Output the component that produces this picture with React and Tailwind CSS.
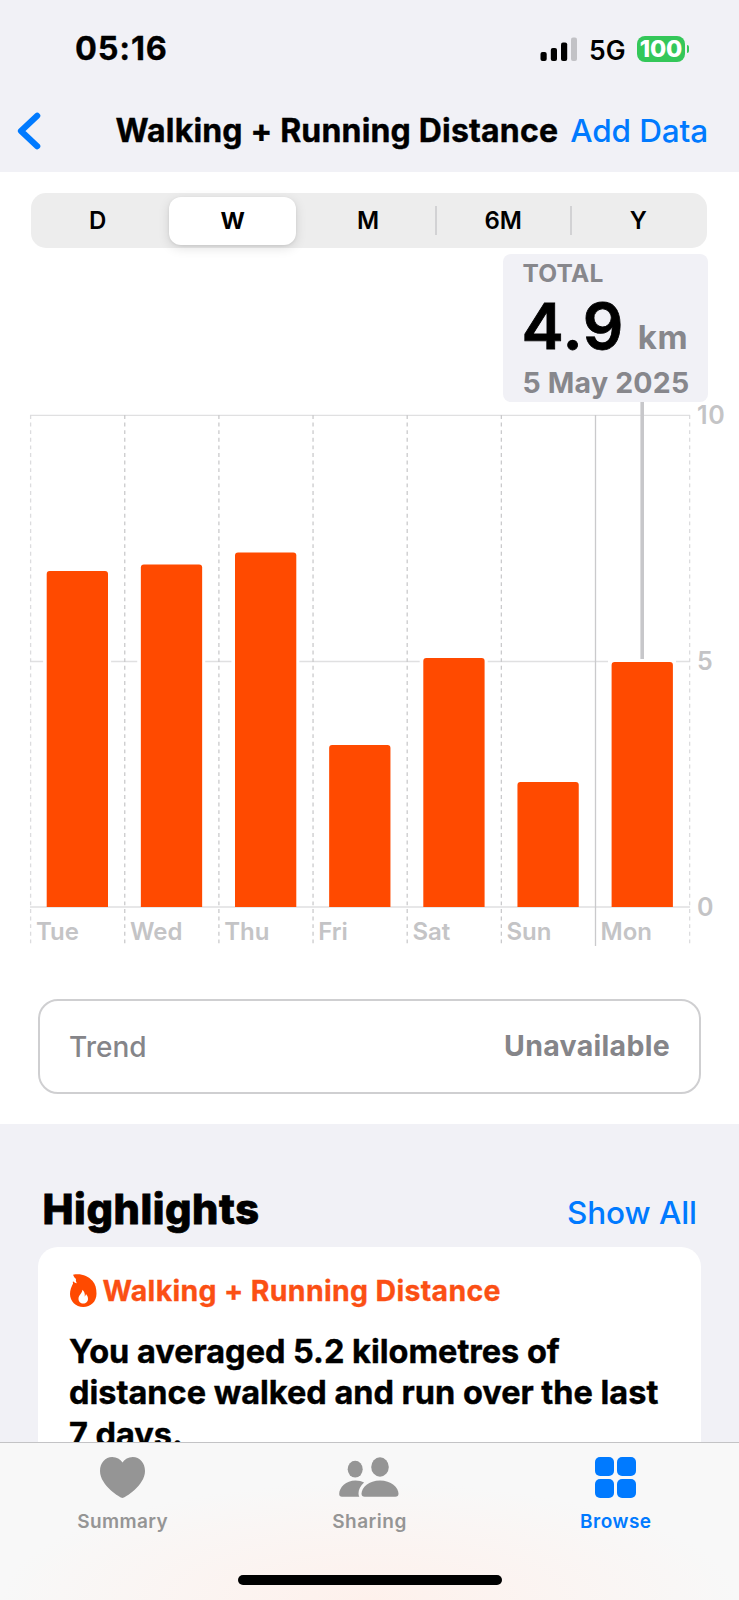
import React from "react";

const ranges = [
  { label: "D", divider: false },
  { label: "W", selected: true },
  { label: "M", divider: false },
  { label: "6M", divider: true },
  { label: "Y", divider: true },
];

const days = [
  { label: "Tue", top: 571 },
  { label: "Wed", top: 564.5 },
  { label: "Thu", top: 552.5 },
  { label: "Fri", top: 745 },
  { label: "Sat", top: 658 },
  { label: "Sun", top: 782 },
  { label: "Mon", top: 662 },
];

const STEP = 94.15;
const LEFT = 30.6;

function StatusBar() {
  return (
    <div className="flex h-[98px] items-center justify-between pl-[75px] pr-[50px] text-black">
      <div className="text-[32.5px] font-bold leading-8 tracking-[0.8px] [-webkit-text-stroke:0.3px_black]">05:16</div>
      <div className="flex items-center">
        <svg className="h-6 w-[37px]" viewBox="0 0 37 24">
          <rect x="0.5" y="15" width="6.2" height="9" rx="2" />
          <rect x="10.8" y="11" width="6.2" height="13" rx="2" />
          <rect x="21" y="5.5" width="6.2" height="18.5" rx="2" />
          <rect x="31" y="0.5" width="6" height="23.5" rx="2" fill="#c2c2c6" />
        </svg>
        <div className="ml-[11.5px] mt-[2px] text-[26.5px] font-semibold leading-6">5G</div>
        <div className="ml-[11.5px] flex h-[26px] w-12 items-center justify-center rounded-[8px] bg-[#34c759] text-[23.5px] font-extrabold leading-6 tracking-[-0.2px] text-white">
          100
        </div>
        <div className="ml-[1.5px] h-2 w-[2.5px] rounded-r-full bg-[#34c759]" />
      </div>
    </div>
  );
}

function NavBar() {
  return (
    <div className="flex h-[74px] items-start">
      <svg className="ml-[17px] mt-[14px] h-[38px] w-6" viewBox="0 0 24 38" fill="none" stroke="#007aff" strokeWidth="6.2" strokeLinecap="round" strokeLinejoin="round">
        <path d="M20.2 3.8L4 19l16.2 15.2" />
      </svg>
      <h1 className="ml-[74.5px] mt-[13px] whitespace-nowrap text-[32px] font-bold leading-10 tracking-[0.18px] [-webkit-text-stroke:0.4px_black]">Walking + Running Distance</h1>
      <button className="ml-3 mt-[13px] whitespace-nowrap text-[31.5px] font-[450] leading-10 tracking-[-0.12px] text-[#007aff]">Add Data</button>
    </div>
  );
}

function Segments() {
  return (
    <div className="ml-[31px] mr-8 grid h-[55px] grid-cols-5 rounded-[15px] bg-[#ededed]">
      {ranges.map((r) => (
        <div key={r.label} className="flex items-center">
          <div className={r.divider ? "-ml-[1.5px] h-[29px] w-[1.5px] bg-[#d2d2d4]" : "-ml-[1.5px] h-[29px] w-[1.5px]"} />
          <div
            className={
              r.selected
                ? "ml-[3px] mr-[5px] flex h-12 flex-1 items-center justify-center rounded-[12px] bg-white pt-[1px] text-[23.5px] font-bold shadow-[0_3px_12px_rgba(0,0,0,0.12),0_1px_3px_rgba(0,0,0,0.08)]"
                : "flex h-12 flex-1 items-center justify-center pr-[2px] pt-[1px] text-[24px] font-semibold"
            }
          >
            {r.label}
          </div>
        </div>
      ))}
    </div>
  );
}

function Callout() {
  return (
    <div className="ml-[503px] mt-[6px] flex h-[148px] w-[205px] flex-col rounded-[8px] bg-[#f1f1f6] pl-[19.5px] text-[#87878c]">
      <div className="mt-[7px] text-[24.5px] font-bold leading-6 tracking-[0.2px]">TOTAL</div>
      <div className="mt-[9px] flex h-16 items-baseline whitespace-nowrap leading-[64px]">
        <span className="-ml-[1px] text-[63.5px] font-semibold tracking-[0.8px] text-black [-webkit-text-stroke:0.8px_black]">4.9</span>
        <span className="ml-[13.5px] text-[33px] font-bold tracking-[0.6px]">km</span>
      </div>
      <div className="mt-[9px] whitespace-nowrap text-[28.5px] font-bold leading-8 tracking-[0.2px]">5 May 2025</div>
    </div>
  );
}

function Chart() {
  return (
    <div className="flex h-[545px] text-[24px] font-semibold leading-6 text-[#c4c4c6]">
      <div className="relative w-[697px]">
        <svg className="block h-[545px] w-[697px]" viewBox="0 402 697 545">
          <g stroke="#e0e0e1" strokeWidth="1.3">
            <path d="M30 415.3H690M30 661.5H690M30 907H690" />
          </g>
          {[0, 1, 2, 3, 4, 5, 6, 7].map((i) => (
            <line
              key={i}
              x1={LEFT + i * STEP}
              x2={LEFT + i * STEP}
              y1="415"
              y2="946"
              stroke={i === 7 || i === 0 ? "#dcdcde" : "#cacacc"}
              strokeWidth="1.3"
              strokeDasharray={i === 6 ? "none" : "3.9 3.7"}
            />
          ))}
          {days.map((d, i) => (
            <g key={d.label}>
              <rect x={LEFT + i * STEP + 12.5} y={d.top - 3} width="68" height={909 - d.top} fill="#fff" />
              <path
                d={`M${LEFT + i * STEP + 16.1} 907V${d.top + 3}q0-3 3-3h55.3q3 0 3 3V907z`}
                fill="#ff4a00"
              />
            </g>
          ))}
          <path d="M642.2 402V659" stroke="#c7c7ca" strokeWidth="3.6" />
        </svg>
        <div className="absolute bottom-[3px] left-[31px] grid w-[658.7px] grid-cols-7">
          {days.map((d) => (
            <div key={d.label} className="pl-[5px]">{d.label}</div>
          ))}
        </div>
      </div>
      <div className="mt-[1px] flex h-[515.5px] flex-col justify-between text-[25px] tracking-[0.8px]">
        <span>10</span>
        <span>5</span>
        <span>0</span>
      </div>
    </div>
  );
}

function Trend() {
  return (
    <div className="mx-[38px] mt-[52px] flex h-[95px] items-center justify-between rounded-[20px] border-2 border-[#cfcfd1] pl-[29px] pr-[29px] text-[28px] text-[#858589]">
      <span className="font-medium">Trend</span>
      <span className="text-[28.5px] font-bold tracking-[0.3px]">Unavailable</span>
    </div>
  );
}

function Flame() {
  return (
    <svg className="h-[33px] w-[26.5px]" viewBox="0 0 78 97">
      <path
        fill="#ff4a00"
        fillRule="evenodd"
        d="M9 2C31-3 53 5 66 20c9 10 12 23 12 38 0 23-17 39-39 39S0 80 0 59c0-12 4-21 9-31-1-3-1-5 0-7 3 3 6 5 11 6-2-4-4-8-2-12-4-3-7-8-9-13zM36 46c2 10-11 15-11 27 0 8 6 14 14 14s14-6 14-14c0-6-3-10-6-14-1 4-2 6-4 7 2-8-1-15-7-20z"
      />
    </svg>
  );
}

function Highlights() {
  return (
    <section className="pt-[65px]">
      <div className="flex h-10 items-center justify-between pl-[42.5px] pr-[42px]">
        <h2 className="text-[41.5px] font-extrabold leading-10 tracking-[0.55px] [-webkit-text-stroke:0.8px_black]">Highlights</h2>
        <button className="mt-[7px] text-[31.5px] font-[450] leading-10 tracking-[-0.05px] text-[#007aff]">Show All</button>
      </div>
      <div className="mx-[38px] mt-[18px] h-[195px] rounded-t-[20px] bg-white pl-[32px] pt-[26.5px]">
        <div className="flex h-[34px] items-center">
          <Flame />
          <span className="ml-[6px] whitespace-nowrap text-[28.5px] font-bold leading-[34px] tracking-[0.32px] text-[#fb4f14] [-webkit-text-stroke:0.3px_#fb4f14]">Walking + Running Distance</span>
        </div>
        <p className="-ml-[1px] mt-[23px] whitespace-nowrap text-[32.5px] font-bold leading-[41.8px] tracking-[-0.02px] [-webkit-text-stroke:0.4px_black]">
          You averaged 5.2 kilometres of
          <br />
          distance walked and run over the last
          <br />7 days.
        </p>
      </div>
    </section>
  );
}

function TabBar() {
  return (
    <nav className="relative flex h-[158px] flex-none flex-col border-t border-[#c3c3c5] bg-[#f8f8f8] bg-[radial-gradient(ellipse_50%_75%_at_50%_100%,#fef1ec,#f8f8f800)] text-[19px] font-semibold leading-5 text-[#959595]">
      <div className="grid flex-none grid-cols-3 pt-[14px]">
        <div className="flex flex-col items-center pr-[1px]">
          <svg className="h-[41px] w-[45px]" viewBox="0 0 45 41" fill="#959595">
            <path d="M22.5 41C20.5 41 0 28.5 0 14 0 5.8 5.4 0 12.2 0 16.8 0 20.3 2.200 22.500 5.500 24.700 2.200 28.200 0 32.800 0 39.600 0 45 5.800 45 14 45 28.500 24.500 41 22.500 41z" />
          </svg>
          <span className="mt-[14px] tracking-[0.4px]">Summary</span>
        </div>
        <div className="flex flex-col items-center">
          <svg className="h-[41px] w-[60px]" viewBox="339.5 1457.5 60 41" fill="#959595">
            <ellipse cx="355.7" cy="1469.7" rx="7.5" ry="8.4" />
            <ellipse cx="380.5" cy="1467.5" rx="8.8" ry="9.7" />
            <path d="M342.5 1497.3Q339.7 1497.3 339.7 1494.5C339.7 1488 346.5 1481 356 1481 359.5 1481 362.3 1481.7 364.6 1483 361 1486 359 1490 359 1494 359 1495.3 359.2 1496.3 359.8 1497.3z" />
            <path d="M365.2 1497.3Q362 1497.3 362 1494.3C362 1488 369.5 1481 380.5 1481 391.5 1481 399 1488 399 1494.3Q399 1497.3 395.8 1497.3z" />
          </svg>
          <span className="mt-[14px] tracking-[0.5px]">Sharing</span>
        </div>
        <div className="flex flex-col items-center text-[#007aff]">
          <div className="grid h-[41px] w-[41px] grid-cols-2 gap-[3px]">
            <i className="rounded-[5px] bg-[#007aff]" />
            <i className="rounded-[5px] bg-[#007aff]" />
            <i className="rounded-[5px] bg-[#007aff]" />
            <i className="rounded-[5px] bg-[#007aff]" />
          </div>
          <span className="mt-[14px] tracking-[0.5px]">Browse</span>
        </div>
      </div>
      <div className="mx-auto mt-[43px] h-[10px] w-[264px] rounded-full bg-black" />
    </nav>
  );
}

export default function App() {
  return (
    <div className="flex h-[1600px] w-[739px] flex-col overflow-hidden bg-[#f1f1f6] font-['Inter',sans-serif] text-black">
      <main className="h-[1442px] flex-none">
        <header className="h-[172px]">
          <StatusBar />
          <NavBar />
        </header>
        <section className="h-[952px] bg-white pt-[21px]">
          <Segments />
          <Callout />
          <Chart />
          <Trend />
        </section>
        <Highlights />
      </main>
      <TabBar />
    </div>
  );
}
